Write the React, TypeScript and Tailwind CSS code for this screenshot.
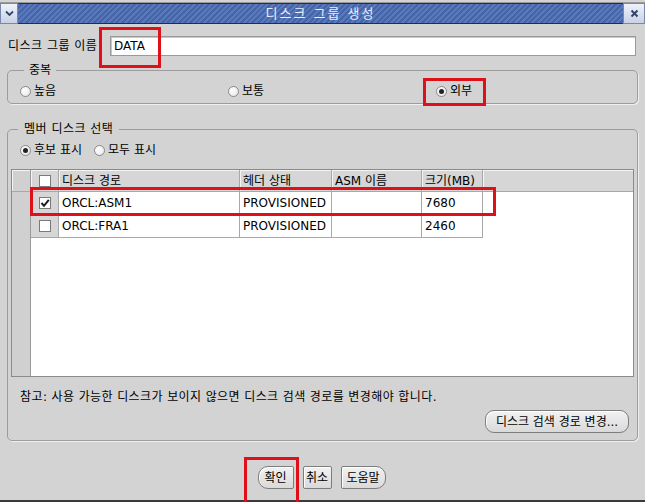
import React from 'react';

const font = 'font-["DejaVu_Sans","Noto_Sans_CJK_KR",sans-serif]';

const Radio = ({ checked, label }: { checked?: boolean; label: string }) => (
  <label className="flex items-center gap-[3px]">
    <span className="flex h-[11px] w-[11px] items-center justify-center rounded-full border border-[#8a8a8a] bg-[radial-gradient(circle_at_35%_35%,#ffffff,#e4e4e4)]">
      {checked && <span className="h-[5px] w-[5px] rounded-full bg-[#222]" />}
    </span>
    <span>{label}</span>
  </label>
);

const Check = ({ checked }: { checked?: boolean }) => (
  <span className="flex h-[12px] w-[12px] items-center justify-center border border-[#7a7a7a] bg-white">
    {checked && (
      <svg width="10" height="10" viewBox="0 0 10 10">
        <path d="M1.5 5 L4 7.8 L8.8 1.8" fill="none" stroke="#1a1a1a" strokeWidth="2" />
      </svg>
    )}
  </span>
);

const Btn = ({ children, className = '' }: { children: React.ReactNode; className?: string }) => (
  <button
    className={`flex h-[23px] items-center justify-center whitespace-nowrap border border-[#7d7d7d] bg-[linear-gradient(#f2f2f2,#d9d9d9)] px-0 shadow-[inset_1px_1px_0_#fff] ${className}`}
  >
    {children}
  </button>
);

const cols = [
  { w: 'w-[181px]', label: '디스크 경로' },
  { w: 'w-[92px]', label: '헤더 상태' },
  { w: 'w-[90px]', label: 'ASM 이름' },
  { w: 'w-[61px]', label: '크기(MB)' },
];

const rows = [
  { checked: true, path: 'ORCL:ASM1', status: 'PROVISIONED', asm: '', size: '7680' },
  { checked: false, path: 'ORCL:FRA1', status: 'PROVISIONED', asm: '', size: '2460' },
];

export default function App() {
  return (
    <div className={`relative flex h-[502px] w-[645px] flex-col overflow-hidden bg-[#d3d3d3] text-[12px] leading-[14px] text-black ${font}`}>
      {/* sliver of the window behind */}
      <div className="h-[3px] shrink-0 border-b border-[#9a9a9a] bg-[#d3d3d3]" />

      {/* title bar */}
      <div className="flex h-[21px] shrink-0">
        <div className="flex w-[18px] items-center justify-center border border-[#7888a8] bg-[linear-gradient(#eef2fa,#c8d2e6)]">
          <svg width="9" height="7" viewBox="0 0 9 7">
            <path d="M1 1.5 L4.5 5 L8 1.5" fill="none" stroke="#34446a" strokeWidth="1.8" />
          </svg>
        </div>
        <div className="flex flex-1 items-center justify-center border-y border-[#1e2d5a] bg-[repeating-linear-gradient(135deg,#5a79ba_0px,#5a79ba_2px,#4665a8_2px,#4665a8_4px)] text-[13px] tracking-[2px] text-[#e8eefc]">
          디스크 그룹 생성
        </div>
        <div className="flex w-[22px] items-center justify-center border border-[#7888a8] bg-[linear-gradient(#eef2fa,#c8d2e6)]">
          <svg width="9" height="9" viewBox="0 0 9 9">
            <path d="M1.5 1.5 L7.5 7.5 M7.5 1.5 L1.5 7.5" fill="none" stroke="#34446a" strokeWidth="2" />
          </svg>
        </div>
      </div>

      {/* name row */}
      <div className="mt-[12px] flex h-[20px] items-center pl-[8px] pr-[9px]">
        <span className="w-[102px] tracking-[0.5px]">디스크 그룹 이름</span>
        <div className="flex h-[20px] flex-1 items-center border border-[#9a9a9a] bg-white pl-[3px] shadow-[inset_1px_1px_0_#c8c8c8]">
          DATA
        </div>
      </div>

      {/* redundancy */}
      <fieldset className="mx-[7px] mt-[7px] rounded-[5px] border border-[#9c9c9c] pb-[5px] pl-[12px] shadow-[1px_1px_0_#f0f0f0]">
        <legend className="ml-[4px] px-[5px]">중복</legend>
        <div className="mt-[7px] grid grid-cols-[208px_208px_1fr]">
          <Radio label="높음" />
          <Radio label="보통" />
          <Radio checked label="외부" />
        </div>
      </fieldset>

      {/* member disks */}
      <fieldset className="mx-[7px] mt-[18px] rounded-[5px] border border-[#9c9c9c] pb-[7px] shadow-[1px_1px_0_#f0f0f0]">
        <legend className="ml-[10px] px-[6px] tracking-[0.5px]">멤버 디스크 선택</legend>
        <div className="mt-[7px] flex gap-[12px] pl-[12px]">
          <Radio checked label="후보 표시" />
          <Radio label="모두 표시" />
        </div>

        {/* table */}
        <div className="ml-[3px] mr-[3px] mt-[12px] flex h-[208px] border border-[#8a8a8a] bg-white">
          <div className="w-[19px] border-r border-[#9a9a9a] bg-[#d0d0d0]">
            <div className="h-[22px] border-b border-[#a8a8a8] shadow-[inset_1px_1px_0_#f4f4f4]" />
          </div>
          <div className="flex flex-1 flex-col">
            <div className="flex h-[22px] border-b border-[#a8a8a8] bg-[#d6d6d6]">
              <div className="flex w-[28px] items-center justify-center border-r border-[#a8a8a8] shadow-[inset_1px_1px_0_#f4f4f4]">
                <Check />
              </div>
              {cols.map((c) => (
                <div key={c.label} className={`${c.w} flex items-center border-r border-[#a8a8a8] pl-[3px] shadow-[inset_1px_1px_0_#f4f4f4]`}>
                  {c.label}
                </div>
              ))}
              <div className="flex-1 shadow-[inset_1px_1px_0_#f4f4f4]" />
            </div>
            {rows.map((r) => (
              <div key={r.path} className="flex h-[23px]">
                <div className="flex w-[28px] items-center justify-center border-r border-b border-[#a8a8a8] bg-[#d6d6d6]">
                  <Check checked={r.checked} />
                </div>
                <div className="flex w-[181px] items-center border-r border-b border-[#a8a8a8] pl-[3px]">{r.path}</div>
                <div className="flex w-[92px] items-center border-r border-b border-[#a8a8a8] pl-[3px]">{r.status}</div>
                <div className="flex w-[90px] items-center border-r border-b border-[#a8a8a8] pl-[3px]">{r.asm}</div>
                <div className="flex w-[61px] items-center border-r border-b border-[#a8a8a8] pl-[3px]">{r.size}</div>
              </div>
            ))}
          </div>
        </div>

        <div className="mt-[13px] pl-[12px] tracking-[0.4px]">참고: 사용 가능한 디스크가 보이지 않으면 디스크 검색 경로를 변경해야 합니다.</div>
        <div className="mt-[6px] flex justify-end pr-[8px]">
          <Btn className="w-[144px] rounded-[9px]">디스크 검색 경로 변경...</Btn>
        </div>
      </fieldset>

      {/* dialog buttons */}
      <div className="mt-[25px] flex justify-center gap-[9px] pr-[2px]">
        <Btn className="w-[36px] rounded-l-[10px] rounded-r-[2px]">확인</Btn>
        <Btn className="w-[29px] rounded-[2px]">취소</Btn>
        <Btn className="w-[45px] rounded-l-[2px] rounded-r-[10px]">도움말</Btn>
      </div>

      <div className="mt-auto h-[2px] bg-[#3a3a3a]" />

      {/* red annotation boxes */}
      <div className="pointer-events-none absolute left-[99px] top-[27px] h-[41px] w-[62px] border-[3px] border-[#e0101a]" />
      <div className="pointer-events-none absolute left-[423px] top-[78px] h-[28px] w-[63px] border-[3px] border-[#e0101a]" />
      <div className="pointer-events-none absolute left-[30px] top-[187px] h-[29px] w-[466px] border-[3px] border-[#e0101a]" />
      <div className="pointer-events-none absolute left-[244px] top-[457px] h-[50px] w-[55px] border-[3px] border-[#e0101a]" />
    </div>
  );
}
